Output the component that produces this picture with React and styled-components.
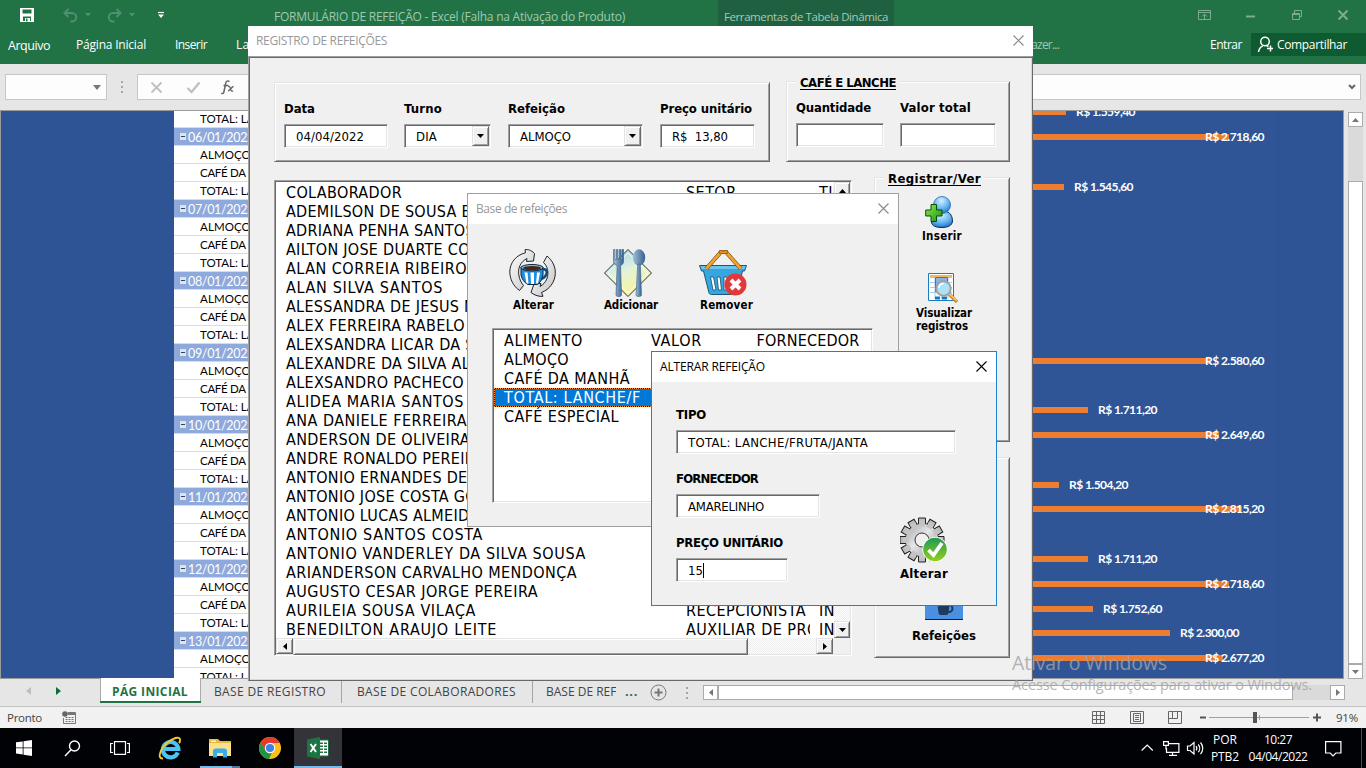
import React, { useLayoutEffect, useRef, useState } from "react";
import styled, { createGlobalStyle, css } from "styled-components";

const Global = createGlobalStyle`
  *, *::before, *::after { box-sizing: border-box; }
  body { margin: 0; background: #000; overflow: hidden; }
  svg { display: block; flex: none; }
`;

const tahoma = `"DejaVu Sans Condensed", "DejaVu Sans", sans-serif`;
const segoe = `"Open Sans", "Noto Sans", sans-serif`;
const calibri = `Lato, "Open Sans", sans-serif`;

/* ---------- text ---------- */

const Label = styled.span`
  display: block;
  flex: none;
  white-space: pre;
  font-family: ${(p) => p.$font || tahoma};
  font-size: ${(p) => p.$size || 13}px;
  font-weight: ${(p) => (p.$bold ? 700 : 400)};
  line-height: ${(p) => p.$lh || 16}px;
  color: ${(p) => p.$color || "#000"};
  ${(p) => p.$ml !== undefined && css`margin-left: ${p.$ml}px;`}
  ${(p) => p.$mt !== undefined && css`margin-top: ${p.$mt}px;`}
  ${(p) => p.$underline && css`text-decoration: underline; text-underline-offset: 2px; text-decoration-skip-ink: none;`}
`;

/* Tracks its text so that the run is exactly w pixels wide. */
function Text({ w, ls = 0, children, ...rest }) {
  const ref = useRef(null);
  const [track, setTrack] = useState(ls);
  useLayoutEffect(() => {
    if (!w) return;
    const el = ref.current;
    const range = document.createRange();
    range.selectNodeContents(el);
    const count = el.textContent.length;
    const natural = range.getBoundingClientRect().width - track * count;
    setTrack((w - natural) / count);
  }, [w]);
  return (
    <Label ref={ref} style={{ letterSpacing: `${track}px` }} {...rest}>
      {children}
    </Label>
  );
}

/* ---------- Excel window ---------- */

const Screen = styled.div`
  position: relative;
  width: 1366px;
  height: 768px;
  overflow: hidden;
  display: flex;
  flex-direction: column;
  background: #e6e6e6;
`;

const TitleBar = styled.div`
  height: 26px;
  flex: none;
  display: flex;
  background: #217346;
`;

const QuickAccess = styled.div`
  width: 274px;
  display: flex;
  padding: 8px 0 0 20px;
`;

const WindowTitle = styled.div`
  width: 444px;
  padding-top: 9px;
`;

const ContextTab = styled.div`
  width: 176px;
  padding: 9px 0 0 6px;
  background: #1e6040;
`;

const WindowButtons = styled.div`
  flex: 1;
  display: flex;
  justify-content: flex-end;
  padding: 9px 17px 0 0;
`;

const RibbonTabs = styled.div`
  height: 38px;
  flex: none;
  display: flex;
  align-items: flex-start;
  padding-top: 7px;
  background: #217346;
`;

const TabSlot = styled.div`
  width: ${(p) => p.$w}px;
  flex: none;
  padding-left: ${(p) => p.$pl || 0}px;
  padding-top: ${(p) => p.$pt ?? 4}px;
`;

const ShareButton = styled.div`
  display: flex;
  align-items: center;
  width: 115px;
  height: 23px;
  padding-left: 6px;
  background: #0f5b31;
`;

const FormulaBar = styled.div`
  height: 46px;
  flex: none;
  display: flex;
  padding: 10px 5px 10px 5px;
`;

const BarBox = styled.div`
  width: ${(p) => (p.$w ? `${p.$w}px` : "auto")};
  flex: ${(p) => (p.$w ? "none" : 1)};
  height: 26px;
  display: flex;
  align-items: center;
  justify-content: ${(p) => p.$justify || "flex-end"};
  padding: 0 ${(p) => p.$pr}px 0 ${(p) => p.$pl || 0}px;
  background: #fdfdfd;
  border: 1px solid #c6c6c6;
`;

const Grip = styled.div`
  width: ${(p) => p.$w}px;
  display: flex;
  flex-direction: column;
  align-items: center;
  justify-content: center;
  gap: 3px;
  & > i { width: 2px; height: 2px; background: #a6a6a6; }
`;

const SheetArea = styled.div`
  height: 569px;
  flex: none;
  display: flex;
`;

const Sheet = styled.div`
  width: 1344px;
  display: flex;
  overflow: hidden;
  background: #2f5496;
  border: 1px solid #9b9b9b;
`;

const SideBlock = styled.div`
  width: 173px;
  flex: none;
`;

const Pivot = styled.div`
  width: 276px;
  flex: none;
  background: #fff;
`;

const PivotRow = styled.div`
  height: ${(p) => (p.$first ? 17 : 18)}px;
  display: flex;
  align-items: center;
  padding-left: ${(p) => (p.$head ? 6 : 26)}px;
  gap: 2px;
  background: ${(p) => (p.$head ? "#8ea9db" : "#fff")};
  border-bottom: 1px solid #d0dcf0;
`;

const Chart = styled.div`
  flex: 1;
  margin-right: 68px;
  margin-top: -11px;
  padding-left: 550px;
  background: #2f5597;
`;

const BarRow = styled.div`
  display: flex;
  align-items: center;
  height: 24.82px;
`;

const Bar = styled.div`
  flex: none;
  height: 6px;
  background: #ed7d31;
`;

const BarLabel = styled.div`
  position: relative;
`;

const VScroll = styled.div`
  width: 22px;
  display: flex;
  flex-direction: column;
  padding: 2px 3px 0 4px;
`;

const ScrollBtn = styled.div`
  width: 15px;
  height: 15px;
  flex: none;
  display: flex;
  align-items: center;
  justify-content: center;
  background: #fff;
  border: 1px solid #ababab;
`;

const Track = styled.div`
  flex: none;
  ${(p) => (p.$vertical ? `height: ${p.$size}px;` : `width: ${p.$size}px;`)}
  background: #dadada;
`;

const Thumb = styled.div`
  flex: 1;
  background: #fff;
  border: 1px solid #ababab;
`;

const TabStrip = styled.div`
  height: 28px;
  flex: none;
  display: flex;
  border-bottom: 1px solid #c3c3c3;
`;

const SheetNav = styled.div`
  width: 100px;
  display: flex;
  padding: 8px 0 0 26px;
  gap: 25px;
`;

const SheetTab = styled.div`
  width: ${(p) => p.$w}px;
  height: 24px;
  padding: 5px 0 0 ${(p) => p.$pl}px;
  overflow: hidden;
  ${(p) =>
    p.$active
      ? css`
          margin-top: -1px;
          height: 25px;
          padding-top: 6px;
          background: #fff;
          border: solid #217346;
          border-width: 0 0 2px;
          box-shadow: inset 1px 0 #ababab, inset -1px 0 #ababab;
        `
      : css`
          border-right: 1px solid ${p.$last ? "transparent" : "#a5a5a5"};
        `}
`;

const HScroll = styled.div`
  flex: 1;
  display: flex;
  height: 15px;
  margin: 6px 21px 0 0;
`;

const StatusBar = styled.div`
  height: 21px;
  flex: none;
  display: flex;
  align-items: center;
  background: #f1f1f1;
  padding: 0 8px 0 7px;
`;

const ViewButtons = styled.div`
  margin-left: auto;
  display: flex;
  gap: 24px;
`;

const Zoom = styled.div`
  display: flex;
  align-items: center;
  margin-left: 17px;
`;

/* ---------- taskbar ---------- */

const Taskbar = styled.div`
  height: 40px;
  flex: none;
  display: flex;
  background: #010206;
`;

const TaskButton = styled.div`
  width: ${(p) => p.$w || 49}px;
  height: 40px;
  display: flex;
  align-items: center;
  justify-content: center;
  background: ${(p) => (p.$active ? "#333439" : "transparent")};
  ${(p) => p.$open && css`box-shadow: inset 0 -2px #76b9ed;`}
`;

const OpenMark = styled.div`
  width: 40px;
  margin-right: 5px;
  margin-left: 4px;
  height: 40px;
  display: flex;
  align-items: center;
  justify-content: center;
  background: linear-gradient(90deg, #76b9ed 32px, #4d7899 32px) 0 38px / 40px 2px no-repeat;
`;

const Tray = styled.div`
  margin-left: auto;
  display: flex;
  align-items: center;
  width: 225px;
`;

const TrayText = styled.div`
  width: ${(p) => p.$w}px;
  display: flex;
  flex-direction: column;
  align-items: center;
  gap: 1px;
`;

const ShowDesktop = styled.div`
  margin-left: auto;
  width: 5px;
  height: 40px;
  border-left: 1px solid #4a4b4e;
`;

const Watermark = styled.div`
  position: absolute;
  left: 1012px;
  top: 650px;
  opacity: 0.8;
`;

/* ---------- dialogs ---------- */

const Dialog = styled.div`
  position: absolute;
  left: ${(p) => p.$x}px;
  top: ${(p) => p.$y}px;
  width: ${(p) => p.$w}px;
  height: ${(p) => p.$h}px;
  display: flex;
  flex-direction: column;
  background: #f0f0f0;
  ${(p) => p.$edge && css`border: 1px solid ${p.$edge};`}
`;

const DialogTitle = styled.div`
  height: 30px;
  flex: none;
  display: flex;
  justify-content: space-between;
  align-items: center;
  padding: 0 ${(p) => p.$pr || 9}px 0 8px;
  background: #fff;
  & > svg { margin-top: -2px; }
`;

const MainBody = styled.div`
  flex: 1;
  padding: 24px 0 0 25px;
  border: 1px solid;
  border-color: #a0a0a0 #696969 #696969 #a0a0a0;
  box-shadow: inset 1px 1px #696969, inset -1px -1px #d8d8d8;
`;

const Row = styled.div`
  display: flex;
  align-items: flex-start;
  gap: ${(p) => p.$gap || 0}px;
  margin-top: ${(p) => p.$mt || 0}px;
`;

const Column = styled.div`
  display: flex;
  flex-direction: column;
  gap: ${(p) => p.$gap || 0}px;
`;

const Frame = styled.div`
  position: relative;
  width: ${(p) => p.$w}px;
  height: ${(p) => p.$h}px;
  margin-top: ${(p) => p.$mt || 0}px;
  padding: ${(p) => p.$pad || "0"};
  border: 1px solid;
  border-color: #e3e3e3 #696969 #696969 #e3e3e3;
  box-shadow: inset 1px 1px #fff, inset -1px -1px #a0a0a0;
`;

const Legend = styled.div`
  position: absolute;
  top: -7px;
  left: 9px;
  padding: 0 4px;
  background: #f0f0f0;
`;

const sunken = css`
  background: #fff;
  border: 1px solid;
  border-color: #a0a0a0 #fff #fff #a0a0a0;
  box-shadow: inset 1px 1px #696969, inset -1px -1px #e3e3e3;
`;

const FieldSlot = styled.div`
  width: ${(p) => p.$w}px;
`;

const FieldBox = styled.div`
  ${sunken}
  display: flex;
  align-items: center;
  width: ${(p) => p.$w}px;
  height: 24px;
  margin-top: 7px;
  padding: 1px 1px 1px 11px;
`;

const raised = css`
  background: #f0f0f0;
  border: 1px solid;
  border-color: #e3e3e3 #696969 #696969 #e3e3e3;
  box-shadow: inset 1px 1px #fff, inset -1px -1px #a0a0a0;
`;

const ClassicBtn = styled.div`
  ${raised}
  width: ${(p) => p.$w || 17}px;
  height: ${(p) => p.$h || 17}px;
  flex: none;
  display: flex;
  align-items: center;
  justify-content: center;
  margin-left: ${(p) => (p.$end ? "auto" : 0)};
`;

const ClassicThumb = styled.div`
  ${raised}
  width: 455px;
  height: 17px;
`;

const ClassicTrack = styled.div`
  flex: 1;
  background: repeating-conic-gradient(#fff 0 25%, #ececec 0 50%) 0 0 / 2px 2px;
`;

const ListBox = styled.div`
  ${sunken}
  width: ${(p) => p.$w}px;
  height: ${(p) => p.$h}px;
  margin-top: ${(p) => p.$mt || 0}px;
  padding: 1px;
`;

const ListMain = styled.div`
  display: flex;
  height: 456px;
`;

const ListRows = styled.div`
  flex: 1;
  overflow: hidden;
  padding-top: 1px;
`;

const ListRow = styled.div`
  display: grid;
  grid-template-columns: ${(p) => p.$cols};
  height: 19px;
  padding-left: 10px;
  ${(p) =>
    p.$selected &&
    css`
      background: #0078d7;
      box-shadow: inset 0 0 0 1px #1a1208;
      outline: 1px dotted #ff8728;
      outline-offset: -1px;
    `}
`;

const Cell = styled.div`
  overflow: hidden;
  margin-right: ${(p) => p.$mr || 0}px;
`;

const VBar = styled.div`
  width: 16px;
  display: flex;
  flex-direction: column;
`;

const HBar = styled.div`
  height: 16px;
  display: flex;
  background: #f0f0f0;
`;

const Corner = styled.div`
  width: 17px;
  background: #f0f0f0;
`;

const DialogBody = styled.div`
  padding: ${(p) => p.$pad};
`;

const ActionButton = styled.div`
  width: 95px;
  display: flex;
  flex-direction: column;
`;

const IconPad = styled.div`
  padding-left: ${(p) => p.$l}px;
`;

const GearAction = styled.div`
  margin: -65px 0 0 224px;
`;

const Caret = styled.i`
  width: 1px;
  height: 15px;
  background: #000;
`;

/* ---------- icons ---------- */

const Tri = ({ dir = "down", c = "#777", s = 7, h }) => {
  const hh = h || Math.ceil(s / 2);
  const wide = dir === "down" || dir === "up";
  const w = wide ? s : hh;
  const t = wide ? hh : s;
  const d = {
    down: `M0 0H${s}L${s / 2} ${hh}Z`,
    up: `M0 ${hh}H${s}L${s / 2} 0Z`,
    left: `M${hh} 0V${s}L0 ${s / 2}Z`,
    right: `M0 0V${s}L${hh} ${s / 2}Z`,
  }[dir];
  return (
    <svg width={w} height={t} viewBox={`0 0 ${w} ${t}`}>
      <path d={d} fill={c} />
    </svg>
  );
};

const CloseX = ({ c }) => (
  <svg width="11" height="11" viewBox="0 0 11 11" stroke={c} strokeWidth="1.1">
    <path d="M.5.5l10 10M10.500.5l-10 10" />
  </svg>
);

const QuickIcons = () => (
  <svg width="150" height="15" viewBox="0 0 150 15" fill="none">
    <path d="M0 0h14v14H0z" fill="#fff" />
    <path d="M2.500 1.500h9v4h-9z" fill="#217346" />
    <path d="M3 8.500h8v4.500H3z" fill="#217346" />
    <path d="M5 10h5v4H5z" fill="#fff" />
    <path d="M6 10.500h1.500v3H6z" fill="#217346" />
    <g stroke="#4f9070" strokeWidth="2">
      <path d="M45 5h7a4 4 0 0 1 0 8.500h-1.500M48.500 1L44.500 5l4 4" />
      <path d="M100 5h-7a4 4 0 0 0 0 8.500h1.500M96.500 1l4 4-4 4" />
    </g>
    <path d="M65 5h6l-3 3.500zM109 5h6l-3 3.500z" fill="#4f9070" />
    <path d="M138 4.500h6" stroke="#fff" strokeWidth="1.200" />
    <path d="M138 6.500h6l-3 3.500z" fill="#fff" />
  </svg>
);

const WindowIcons = () => (
  <svg width="152" height="13" viewBox="0 0 152 13" fill="none" stroke="#7dac91">
    <path d="M1.500 1.500h12v9h-12zM1.500 3.500h12M7.500 10V5M5 7.500L7.500 5 10 7.500" />
    <path d="M49 7.500h9" strokeWidth="2" />
    <path d="M95.500 4.500h7v6h-7zM95.500 5.500h7M97.500 4V1.500h7v6H103" />
    <path d="M141.500 1.500l9 9M150.500 1.500l-9 9" strokeWidth="2" />
  </svg>
);

const ShareIcon = () => (
  <svg width="17" height="17" viewBox="0 0 17 17" fill="none" stroke="#fff" strokeWidth="1.500">
    <circle cx="8" cy="5.500" r="4.300" />
    <path d="M1.500 16c.3-3 2-5 4.300-6.200M9.500 9.500l2 1M10 12.500h6M13.500 9.500v6" />
  </svg>
);

const FxIcons = () => (
  <svg width="86" height="18" viewBox="0 0 86 18" fill="none">
    <path d="M1.500 4.500l10 10M11.500 4.500l-10 10" stroke="#c0c0c0" strokeWidth="1.800" />
    <path d="M37.500 10l4 4 8-9.500" stroke="#c0c0c0" strokeWidth="2.300" />
    <path d="M79.500 3.500c-2.500-1.500-3.500 0-4 2.500l-1.500 7.500c-.4 2-1.500 2.500-2.800 1.800M73.500 7.500h5" stroke="#666" strokeWidth="1.500" />
    <path d="M78 8.500c1.500-.5 2 .5 2.500 2.300s1 2.700 2.700 2.200M83.500 8.500c-1.500 0-4 4.500-5.500 4.500" stroke="#666" strokeWidth="1.300" />
  </svg>
);

const Collapse = () => (
  <svg width="6" height="7" viewBox="0 0 6 7">
    <path d="M0 0h6v7H0z" fill="#dfe3ea" />
    <path d="M1 3.500h4" stroke="#33435e" />
  </svg>
);

const InsertIcon = () => (
  <svg width="30" height="33" viewBox="0 0 30 33">
    <defs>
      <radialGradient id="ball" cx=".45" cy=".25" r=".8">
        <stop offset="0" stopColor="#d4f0ff" />
        <stop offset=".55" stopColor="#67b7f2" />
        <stop offset="1" stopColor="#1668c4" />
      </radialGradient>
      <linearGradient id="plus" x2="1" y2="1">
        <stop offset="0" stopColor="#8cf04e" />
        <stop offset="1" stopColor="#1b8f10" />
      </linearGradient>
    </defs>
    <path d="M6.500 26c0-6 4-9.500 8-10.500h7c4 1 6 5.500 6 9.500 0 4.500-5 6.500-10.500 6.500S6.500 30 6.500 26z" fill="url(#ball)" stroke="#0b2d5a" />
    <circle cx="17" cy="9" r="8.500" fill="url(#ball)" stroke="#2a6aa6" strokeWidth=".8" />
    <path d="M6 8.500h5.500V14H17v6h-5.500v5.500H6V20H.700v-6H6z" fill="url(#plus)" stroke="#0d4d08" />
  </svg>
);

const ViewIcon = () => (
  <svg width="31" height="31" viewBox="0 0 31 31">
    <path d="M.500.500h25v27H.500z" fill="#fff" stroke="#1a7cc0" />
    <path d="M2 2h22v3H2z" fill="#f5b851" />
    <path d="M2 9.500h22M2 14.500h22M2 19.500h22M7 2v24M13.500 2v24M20 2v24" stroke="#a9c8e8" />
    <path d="M7 5h13v14H7z" fill="#6fa0dc" fillOpacity=".8" />
    <path d="M7.500 4.500h12v14h-12z" fill="none" stroke="#3a78bd" />
    <path d="M7 23.500h5v3H7zM14 23.500h5v3h-5z" fill="#1d75bd" />
    <path d="M21 21l8 8" stroke="#d88d22" strokeWidth="3.800" />
    <path d="M21 20.500l7.500 7" stroke="#f8cf74" strokeWidth="1.300" />
    <circle cx="15.500" cy="15.500" r="7.200" fill="#aee1f6" stroke="#9aa3aa" strokeWidth="2" />
    <path d="M11 15c0-3 2-4.500 4.500-4.500" stroke="#fff" strokeWidth="1.500" fill="none" />
  </svg>
);

const MealIcon = () => (
  <svg width="38" height="31" viewBox="0 0 38 31">
    <path d="M0 0h38v30H0z" fill="#4a90e2" />
    <path d="M0 29.500h38" stroke="#0b1c38" />
    <path d="M12 9h13l-1.500 14c-.2 1-1 2-2 2h-6c-1 0-1.700-.7-2-2z" fill="#1f3a5c" />
    <circle cx="24" cy="18.500" r="3.500" fill="none" stroke="#1f3a5c" strokeWidth="2" />
  </svg>
);

const ChangeIcon = () => (
  <svg width="48" height="48" viewBox="0 0 48 48">
    <defs>
      <linearGradient id="arrow" x2="1" y2="1">
        <stop offset="0" stopColor="#fff" />
        <stop offset="1" stopColor="#c4c4c4" />
      </linearGradient>
    </defs>
    <path d="M16 .700C19 .200 22 1 25.500 4.500L24.500 12 17.500 12.500 18 9.500C11 13 8.500 20 10 27c.7 3.500 2 6.500 4.500 9.500L10.500 41.500C4 37 1 30 .800 23 .700 14 7 6 16.500 3.800z" fill="url(#arrow)" stroke="#222" />
    <path d="M38 7c5.500 4.500 8.500 10.500 8.300 17.500C46 33 40.500 40.500 32.500 43.500l1.500 3.800c-4 .4-8-.8-12-3.800l3-8.500 7-.500-1 3c6.500-3.500 9-10.500 7.500-17-.7-3-2-5-4-7z" fill="url(#arrow)" stroke="#222" />
    <path d="M12 18h22v8c-1 5-3 8-6 9.500h-9c-4-2-6-5.500-7-9.500z" fill="#1f8de0" stroke="#06253d" />
    <path d="M15.500 23.500h3l1 11h-2zM21.500 23.500h3.500v11.500h-3zM28 23.500h3l-2 11h-2z" fill="#fff" />
    <path d="M34 20.500c4-1 4.500 3 3 5.500-1 2-3 3.500-5 4" stroke="#0a4c86" strokeWidth="2.600" fill="none" />
    <ellipse cx="23" cy="18.700" rx="11" ry="3.200" fill="#7cc9f6" stroke="#06253d" />
    <ellipse cx="23" cy="19.200" rx="9" ry="2.300" fill="#4b2616" />
  </svg>
);

const AddIcon = () => (
  <svg width="48" height="48" viewBox="0 0 48 48">
    <defs>
      <linearGradient id="plate" x1=".1" x2=".5" y2="1">
        <stop offset="0" stopColor="#9fd2f4" />
        <stop offset=".5" stopColor="#e2f2dc" />
        <stop offset="1" stopColor="#fbf39a" />
      </linearGradient>
      <linearGradient id="steel" x2="1">
        <stop offset="0" stopColor="#a3bfd9" />
        <stop offset="1" stopColor="#33618f" />
      </linearGradient>
    </defs>
    <path d="M24 .500L47.500 24 24 47.500.500 24z" fill="url(#plate)" stroke="#2f342f" />
    <path d="M24 4L44 24 24 44 4 24z" fill="none" stroke="#fff" strokeOpacity=".7" />
    <path d="M9.500.500h1.500v10h1.500V.500H14v10h1.500V.500H17v10h1V.500h1.500v12c0 2-1.300 3.500-3 4l1 29.500c0 2-5.500 2-5.500 0l1.200-29.500C11 16 9.500 14.500 9.500 12.500z" fill="url(#steel)" stroke="#41658a" strokeWidth=".7" />
    <ellipse cx="35" cy="8.500" rx="6.200" ry="8.200" fill="url(#steel)" />
    <path d="M33.700 15h2.600l1.200 31c0 2-5.500 2-5.500 0z" fill="url(#steel)" stroke="#41658a" strokeWidth=".6" />
  </svg>
);

const RemoveIcon = () => (
  <svg width="49" height="48" viewBox="0 0 49 48">
    <path d="M.500 16.500h47l-2 5.500h-2L38 43.500c-.5 1.500-1 2-2.500 2h-23c-1.500 0-2.300-.7-2.600-2L4.500 22h-2z" fill="#37a6de" stroke="#1c567a" />
    <path d="M1.500 17h45l-.8 3H2.500z" fill="#6cc5ee" />
    <path d="M11.500 28h3l2.500 13h-3zM18 28h3l1.500 13h-3zM25 28h3v13h-3zM31 28h3l-2 13h-2z" fill="#fff" stroke="#174a6a" strokeWidth=".8" />
    <path d="M7 20L22 3h5l15 17" fill="none" stroke="#7a4a12" strokeWidth="4" />
    <path d="M7 20L22 3h5l15 17" fill="none" stroke="#f0a331" strokeWidth="2.800" />
    <path d="M20.500 1.500h2.500l1.500 1 1.500-1h2.500v3h-8z" fill="#e2922a" stroke="#7a4a12" strokeWidth=".6" />
    <circle cx="36.500" cy="35.500" r="11" fill="#e0393b" />
    <path d="M32 31l9 9M41 31l-9 9" stroke="#fff" strokeWidth="4" />
  </svg>
);

const teeth = Array.from({ length: 12 }, (_, i) => i * 30);
const GearIcon = () => (
  <svg width="49" height="48" viewBox="0 0 49 48">
    <defs>
      <linearGradient id="gear" x2="1" y2="1">
        <stop offset="0" stopColor="#a2a2a2" />
        <stop offset=".45" stopColor="#e6e6e6" />
        <stop offset="1" stopColor="#9a9a9a" />
      </linearGradient>
      <linearGradient id="ok" x2="0" y2="1">
        <stop offset="0" stopColor="#1f9a55" />
        <stop offset="1" stopColor="#93cf1e" />
      </linearGradient>
    </defs>
    {teeth.map((a) => (
      <path key={a} d="M18.500 8V1h7v7" transform={`rotate(${a} 22 23)`} fill="#bdbdbd" stroke="#222" />
    ))}
    <circle cx="22" cy="23" r="17" fill="#222" />
    <circle cx="22" cy="23" r="16.300" fill="url(#gear)" />
    {teeth.map((a) => (
      <path key={a} d="M19 9.500V4h6v5.500z" transform={`rotate(${a} 22 23)`} fill="#c4c4c4" />
    ))}
    <circle cx="22" cy="23" r="7" fill="#f0f0f0" stroke="#333" />
    <circle cx="35" cy="32.500" r="12.600" fill="#fff" />
    <circle cx="35" cy="32.500" r="11.800" fill="url(#ok)" />
    <path d="M28.500 33l5 5L42 26" stroke="#fff" strokeWidth="3.800" fill="none" />
  </svg>
);

const MacroIcon = () => (
  <svg width="14" height="13" viewBox="0 0 14 13" fill="none" stroke="#777">
    <path d="M6 1.500h7.500v11h-12V7M6 2.500h7.500M6 3.500h7.500" />
    <path d="M3.500 6.500h8M3.500 8.500h8M3.500 10.500h8" strokeDasharray="2 1" />
    <circle cx="3" cy="3" r="2.800" fill="#666" stroke="none" />
  </svg>
);

const GridView = () => (
  <svg width="14" height="14" viewBox="0 0 14 14" fill="none" stroke="#666">
    <path d="M.500.500h12v12H.500zM4.500.500v12M8.500.500v12M.500 4.500h12M.500 8.500h12" />
  </svg>
);
const PageView = () => (
  <svg width="14" height="14" viewBox="0 0 14 14" fill="none" stroke="#666">
    <path d="M.500.500h13v12H.500zM3.500 2.500h7v8h-7zM5 4.500h4M5 6.500h4M5 8.500h4" />
  </svg>
);
const BreakView = () => (
  <svg width="14" height="14" viewBox="0 0 14 14" fill="none" stroke="#666">
    <path d="M.500.500h13v12H.500zM.500 7.500h9v-7M4.500 7V.500" />
  </svg>
);

const ZoomSlider = () => (
  <svg width="124" height="13" viewBox="0 0 124 13" fill="none">
    <path d="M1 6.500h6" stroke="#555" strokeWidth="2" />
    <path d="M10 6.500h100M60.500 4v5" stroke="#a0a0a0" />
    <path d="M54 1h4v11h-4z" fill="#555" />
    <path d="M114 6.500h8M118 2.500v8" stroke="#555" strokeWidth="2" />
  </svg>
);

const WinLogo = () => (
  <svg width="16" height="16" viewBox="0 0 16 16" fill="#fff">
    <path d="M0 2.300L6.700 1.400v6.100H0zM7.500 1.300L16 0v7.500H7.500zM0 8.300h6.700v6.200L0 13.600zM7.500 8.300H16V16l-8.500-1.300z" />
  </svg>
);
const SearchIcon = () => (
  <svg width="17" height="17" viewBox="0 0 17 17" fill="none" stroke="#fff" strokeWidth="1.400">
    <circle cx="10.500" cy="6" r="5" />
    <path d="M7 9.700L1 16" />
  </svg>
);
const TaskView = () => (
  <svg width="20" height="14" viewBox="0 0 20 14" fill="none" stroke="#fff" strokeWidth="1.200">
    <path d="M4.500.600h11v12.800h-11zM3 2.500H.600v9H3M17 2.500h2.400v9H17" />
  </svg>
);
const IeIcon = () => (
  <svg width="24" height="24" viewBox="0 0 24 24" fill="none">
    <path d="M19.800 16.500A7.700 7.700 0 1 1 20.300 13H7" stroke="#4cc4f2" strokeWidth="4.200" />
    <path d="M5 22.500C-2 23 3 11 11 5.500c6-4.500 12-5.500 11-.500-.2 1-.5 1.500-1 2.300" stroke="#f6c72d" strokeWidth="1.900" />
  </svg>
);
const FolderIcon = () => (
  <svg width="22" height="19" viewBox="0 0 22 19">
    <path d="M0 0h9l2 2h11v15H0z" fill="#e8b93d" />
    <path d="M0 4h22v13H0z" fill="#fde08c" />
    <path d="M2 1.500h5v1.500H2z" fill="#fff3c4" />
    <path d="M4 18.500V11l2-1.500h10l2 1.500v7.500h-4V14H8v4.500z" fill="#3aaee8" />
  </svg>
);
const ChromeIcon = () => (
  <svg width="22" height="22" viewBox="0 0 22 22">
    <circle cx="11" cy="11" r="11" fill="#fbc116" />
    <path d="M1.500 5.500a11 11 0 0 1 19 0L20.500 6H11L6.500 13.500z" fill="#e33b2e" />
    <path d="M1.500 5.500L6.700 13.500A5 5 0 0 0 13 15.600L10 22A11 11 0 0 1 1.500 5.500z" fill="#229342" />
    <circle cx="11" cy="11" r="5.200" fill="#fff" />
    <circle cx="11" cy="11" r="4.100" fill="#3f7fe8" />
  </svg>
);
const ExcelIcon = () => (
  <svg width="22" height="22" viewBox="0 0 22 22">
    <path d="M11 3h10.500v16H11z" fill="#fff" stroke="#1f7244" />
    <path d="M13 5.500h3v1.500h-3zM17 5.500h3v1.500h-3zM13 8.500h3V10h-3zM17 8.500h3V10h-3zM13 11.500h3V13h-3zM17 11.500h3V13h-3zM13 14.500h3V16h-3zM17 14.500h3V16h-3z" fill="#1f7244" />
    <path d="M0 2.500L13 0v22L0 19.500z" fill="#1f7244" />
    <path d="M3.500 7l5.500 8M9 7l-5.500 8" stroke="#fff" strokeWidth="1.900" />
  </svg>
);
const TrayIcons = () => (
  <svg width="64" height="18" viewBox="0 0 64 18" fill="none" stroke="#fff" strokeWidth="1.200">
    <path d="M.600 11.500L6.200 6l5.600 5.500" />
    <path d="M28 4.600h9.900v8.800H25.500V9M28 16.400h8M31.500 13.500v3M22.600 2.600h4.800v3.800h-4.800zM25 6.500v4" />
    <path d="M46.500 7v4.500h2.500l4 3.500V3.500L49 7zM55 7.200c1 1.200 1 3 0 4.200M57.200 5.500c2 2.200 2 5.500 0 7.700M59.500 3.500c3 3.300 3 8.300 0 11.600" />
  </svg>
);
const NoticeIcon = () => (
  <svg width="17" height="17" viewBox="0 0 17 17" fill="none" stroke="#fff" strokeWidth="1.200">
    <path d="M.600 1.600h15.300v11.400h-5L8 16l-2.800-3H.600z" />
  </svg>
);

/* ---------- data ---------- */

const days = ["06", "07", "08", "09", "10", "11", "12", "13"];
const meals = [
  ["ALMOÇO", 0.1],
  ["CAFÉ DA MANHÃ", -0.3],
  ["TOTAL: LANCHE/FRUTA", 0],
];

/* [bar end, value]; null leaves the day without a bar */
const bars = [
  [1066, "1.559,40"],
  [1229, "2.718,60"],
  null,
  [1064, "1.545,60"],
  null, null, null, null, null, null,
  [1210, "2.580,60"],
  null,
  [1088, "1.711,20"],
  [1219, "2.649,60"],
  null,
  [1059, "1.504,20"],
  [1242, "2.815,20"],
  null,
  [1088, "1.711,20"],
  [1229, "2.718,60"],
  [1093, "1.752,60"],
  [1170, "2.300,00"],
  [1223, "2.677,20"],
];

const people = [
  ["COLABORADOR", 116, "SETOR", "TIPO"],
  ["ADEMILSON DE SOUSA BRITO"],
  ["ADRIANA PENHA SANTOS"],
  ["AILTON JOSE DUARTE COSTA"],
  ["ALAN CORREIA RIBEIRO", 181],
  ["ALAN SILVA SANTOS", 157],
  ["ALESSANDRA DE JESUS MELO"],
  ["ALEX FERREIRA RABELO", 179],
  ["ALEXSANDRA LICAR DA SILVA"],
  ["ALEXANDRE DA SILVA ALVES"],
  ["ALEXSANDRO PACHECO", 178],
  ["ALIDEA MARIA SANTOS", 178],
  ["ANA DANIELE FERREIRA", 181],
  ["ANDERSON DE OLIVEIRA", 184],
  ["ANDRE RONALDO PEREIRA"],
  ["ANTONIO ERNANDES DE SOUSA"],
  ["ANTONIO JOSE COSTA GOMES"],
  ["ANTONIO LUCAS ALMEIDA"],
  ["ANTONIO SANTOS COSTA", 197],
  ["ANTONIO VANDERLEY DA SILVA SOUSA", 300],
  ["ARIANDERSON CARVALHO MENDONÇA", 291],
  ["AUGUSTO CESAR JORGE PEREIRA", 252],
  ["AURILEIA SOUSA VILAÇA", 190, "RECEPCIONISTA", "INTERNO"],
  ["BENEDILTON ARAUJO LEITE", 211, "AUXILIAR DE PRODUÇÃO", "INTERNO"],
];

/* ---------- parts ---------- */

const Field = ({ label, lw, w, slot, value, vw, combo }) => (
  <FieldSlot $w={slot || w}>
    <Text w={lw} $bold>{label}</Text>
    <FieldBox $w={w}>
      {value && <Text w={vw} $mt={2}>{value}</Text>}
      {combo && (
        <ClassicBtn $end $w={17} $h={20}>
          <Tri c="#000" s={7} h={4} />
        </ClassicBtn>
      )}
    </FieldBox>
  </FieldSlot>
);

const MainDialog = () => (
  <Dialog $x={248} $y={26} $w={785} $h={655}>
    <DialogTitle $pr={9}>
      <Text w={131} $font={segoe} $size={12} $color="#999">REGISTRO DE REFEIÇÕES</Text>
      <CloseX c="#888" />
    </DialogTitle>
    <MainBody>
      <Row $gap={16}>
        <Frame $w={496} $h={80} $mt={1} $pad="18px 0 0 9px">
          <Row $gap={16}>
            <Field label="Data" lw={31} w={104} value="04/04/2022" vw={68} />
            <Field label="Turno" lw={38} w={87} slot={88} value="DIA" vw={21} combo />
            <Field label="Refeição" lw={57} w={135} slot={136} value="ALMOÇO" vw={51} combo />
            <Field label="Preço unitário" lw={92} w={95} value="R$  13,80" vw={56} />
          </Row>
        </Frame>
        <Frame $w={224} $h={81} $pad="18px 0 0 9px">
          <Legend>
            <Text w={96} $bold $underline>CAFÉ E LANCHE</Text>
          </Legend>
          <Row $gap={16}>
            <Field label="Quantidade" lw={75} w={88} />
            <Field label="Valor total" lw={71} w={96} />
          </Row>
        </Frame>
      </Row>
      <Row $gap={22} $mt={15}>
        <ListBox $w={578} $h={476} $mt={3}>
          <ListMain>
            <ListRows>
              {people.map(([name, w, sector, kind]) => (
                <ListRow key={name} $cols="400px 133px 1fr">
                  <Cell><Text w={w} ls={0.28} $size={16} $lh={19}>{name}</Text></Cell>
                  <Cell $mr={9}><Text ls={0.45} $size={16} $lh={19}>{sector}</Text></Cell>
                  <Cell><Text ls={0.4} $size={16} $lh={19}>{kind}</Text></Cell>
                </ListRow>
              ))}
            </ListRows>
            <VBar>
              <ClassicBtn $w={16}><Tri dir="up" c="#000" s={7} h={4} /></ClassicBtn>
              <ClassicTrack />
              <ClassicBtn $w={16}><Tri c="#000" s={7} h={4} /></ClassicBtn>
            </VBar>
          </ListMain>
          <HBar>
            <ClassicBtn $w={17} $h={16}><Tri dir="left" c="#000" s={7} h={4} /></ClassicBtn>
            <ClassicThumb />
            <ClassicTrack />
            <ClassicBtn $w={17} $h={16}><Tri dir="right" c="#000" s={7} h={4} /></ClassicBtn>
            <Corner />
          </HBar>
        </ListBox>
        <Column $gap={15}>
          <Frame $w={136} $h={265} $pad="18px 0 0 50px">
            <Legend>
              <Text w={93} $bold $underline>Registrar/Ver</Text>
            </Legend>
            <InsertIcon />
            <Text w={40} $bold $size={11.500} $ml={-3} $mt={-1}>Inserir</Text>
            <Column>
              <ViewPad><ViewIcon /></ViewPad>
              <Text w={56} $bold $size={11.500} $lh={13} $ml={-9} $mt={3}>Visualizar</Text>
              <Text w={52} $bold $size={11.500} $lh={13} $ml={-9}>registros</Text>
            </Column>
          </Frame>
          <Frame $w={136} $h={201} $pad="132px 0 0 50px">
            <MealIcon />
            <Text w={64} $bold $mt={7} $ml={-13}>Refeições</Text>
          </Frame>
        </Column>
      </Row>
    </MainBody>
  </Dialog>
);

const ViewPad = styled.div`
  padding: 29px 0 0 3px;
`;

const foodCols = "147px 105.5px 1fr";
const foods = [
  ["ALMOÇO", 65],
  ["CAFÉ DA MANHÃ", 126],
  ["TOTAL: LANCHE/F", 137],
  ["CAFÉ ESPECIAL", 115],
];

const MealsDialog = () => (
  <Dialog $x={467} $y={193} $w={432} $h={334} $edge="#a0a0a0">
    <DialogTitle>
      <Text w={91} $font={segoe} $size={12} $color="#999">Base de refeições</Text>
      <CloseX c="#888" />
    </DialogTitle>
    <DialogBody $pad="25px 0 0 24px">
      <Row>
        <ActionButton>
          <IconPad $l={17}><ChangeIcon /></IconPad>
          <Text w={41} $bold $size={11.500} $ml={21}>Alterar</Text>
        </ActionButton>
        <ActionButton>
          <IconPad $l={17}><AddIcon /></IconPad>
          <Text w={54} $bold $size={11.500} $ml={17}>Adicionar</Text>
        </ActionButton>
        <ActionButton>
          <IconPad $l={17}><RemoveIcon /></IconPad>
          <Text w={53} $bold $size={11.500} $ml={18}>Remover</Text>
        </ActionButton>
      </Row>
      <ListBox $w={381} $h={175} $mt={15}>
        <ListRows>
          <ListRow $cols={foodCols}>
            <Text w={79} $size={16} $lh={19}>ALIMENTO</Text>
            <Text w={51} $size={16} $lh={19}>VALOR</Text>
            <Text w={103} $size={16} $lh={19}>FORNECEDOR</Text>
          </ListRow>
          {foods.map(([f, w], i) => (
            <ListRow key={f} $cols={foodCols} $selected={i === 2}>
              <Text w={w} $size={16} $lh={19} $color={i === 2 ? "#fff" : "#000"}>{f}</Text>
            </ListRow>
          ))}
        </ListRows>
      </ListBox>
    </DialogBody>
  </Dialog>
);

const EditDialog = () => (
  <Dialog $x={651} $y={351} $w={346} $h={255} $edge="#1883d7">
    <DialogTitle>
      <Text w={105} $font={segoe} $size={12}>ALTERAR REFEIÇÃO</Text>
      <CloseX c="#000" />
    </DialogTitle>
    <DialogBody $pad="25px 0 0 24px">
      <Column $gap={17}>
        <Field label="TIPO" lw={30} w={280} value="TOTAL: LANCHE/FRUTA/JANTA" vw={180} />
        <Field label="FORNECEDOR" lw={82} w={144} value="AMARELINHO" vw={76} />
        <div>
          <Text w={107} $bold>PREÇO UNITÁRIO</Text>
          <FieldBox $w={112}>
            <Text w={15} $mt={2}>15</Text>
            <Caret />
          </FieldBox>
        </div>
      </Column>
      <GearAction>
        <GearIcon />
        <Text w={48} $bold $mt={1}>Alterar</Text>
      </GearAction>
    </DialogBody>
  </Dialog>
);

const W = "#fff";

export default function App() {
  return (
    <>
      <Global />
      <Screen>
        <TitleBar>
          <QuickAccess><QuickIcons /></QuickAccess>
          <WindowTitle>
            <Text w={351} $font={segoe} $size={12} $color="#a0c8b0">
              FORMULÁRIO DE REFEIÇÃO - Excel (Falha na Ativação do Produto)
            </Text>
          </WindowTitle>
          <ContextTab>
            <Text w={164} $font={segoe} $size={11.500} $color="#a5c9b4">Ferramentas de Tabela Dinâmica</Text>
          </ContextTab>
          <WindowButtons><WindowIcons /></WindowButtons>
        </TitleBar>
        <RibbonTabs>
          <TabSlot $w={76} $pl={8} $pt={5}><Text w={42} $font={segoe} $size={12.500} $color={W}>Arquivo</Text></TabSlot>
          <TabSlot $w={99}><Text w={70} $font={segoe} $size={12} $color={W}>Página Inicial</Text></TabSlot>
          <TabSlot $w={61}><Text w={32} $font={segoe} $size={12} $color={W}>Inserir</Text></TabSlot>
          <TabSlot $w={789}><Text w={98} $font={segoe} $size={12} $color={W}>Layout da Página</Text></TabSlot>
          <TabSlot $w={185} $pl={3}><Text w={31} $font={segoe} $size={12} $color="#a0c8b0">fazer...</Text></TabSlot>
          <TabSlot $w={41}><Text w={32} $font={segoe} $size={12} $color={W}>Entrar</Text></TabSlot>
          <ShareButton>
            <ShareIcon />
            <Text w={70} $font={segoe} $size={12} $color={W} $ml={3} $mt={1}>Compartilhar</Text>
          </ShareButton>
        </RibbonTabs>
        <FormulaBar>
          <BarBox $w={102} $pr={5}><Tri s={8} h={5} c="#777" /></BarBox>
          <Grip $w={30}><i /><i /><i /></Grip>
          <BarBox $w={130} $pl={12} $pr={0} $justify="flex-start"><FxIcons /></BarBox>
          <BarBox $pr={4}>
            <svg width="8" height="6" viewBox="0 0 8 6"><path d="M1 1l3 3 3-3" fill="none" stroke="#666" strokeWidth="2" /></svg>
          </BarBox>
        </FormulaBar>
        <SheetArea>
          <Sheet>
            <SideBlock />
            <Pivot>
              <PivotRow $first><Text $font={calibri} $size={11.500}>TOTAL: LANCHE</Text></PivotRow>
              {days.map((d) => (
                <React.Fragment key={d}>
                  <PivotRow $head>
                    <Collapse />
                    <Text w={66} $font={calibri} $size={12.500} $mt={2} $color="#fff">{`${d}/01/2022`}</Text>
                  </PivotRow>
                  {meals.map(([m, ls]) => (
                    (d !== "13" || m !== "CAFÉ DA MANHÃ") && (
                      <PivotRow key={m}><Text ls={ls} $font={calibri} $size={11.500}>{m}</Text></PivotRow>
                    )
                  ))}
                </React.Fragment>
              ))}
            </Pivot>
            <Chart>
              {bars.map((b, i) => {
                if (!b) return <BarRow key={i} />;
                const start = Math.min(b[0] + 10, 1205);
                return (
                  <BarRow key={i}>
                    <Bar style={{ width: b[0] - 1000 }} />
                    <BarLabel style={{ marginLeft: start - b[0] }}>
                      <Text w={59} $font={calibri} $size={12} $bold $color={W}>{`R$ ${b[1]}`}</Text>
                    </BarLabel>
                  </BarRow>
                );
              })}
            </Chart>
          </Sheet>
          <VScroll>
            <ScrollBtn><Tri dir="up" s={7} h={4} /></ScrollBtn>
            <Track $size={54} $vertical />
            <Thumb />
            <ScrollBtn><Tri s={7} h={4} /></ScrollBtn>
          </VScroll>
        </SheetArea>
        <TabStrip>
          <SheetNav>
            <Tri dir="left" s={8} h={5} c="#bdbdbd" />
            <Tri dir="right" s={8} h={5} c="#0f6b3a" />
          </SheetNav>
          <SheetTab $active $w={101} $pl={12}><Text w={76} $font={segoe} $size={12} $bold $color="#217346">PÁG INICIAL</Text></SheetTab>
          <SheetTab $w={141} $pl={13}><Text w={112} $font={segoe} $size={12} $color="#444">BASE DE REGISTRO</Text></SheetTab>
          <SheetTab $w={191} $pl={15}><Text w={159} $font={segoe} $size={12} $color="#444">BASE DE COLABORADORES</Text></SheetTab>
          <SheetTab $w={84} $pl={13} $last><Text ls={0} $font={segoe} $size={12} $color="#444">BASE DE REFEIÇÕES</Text></SheetTab>
          <TabSlot $w={33} $pl={8}><Text w={13} $font={segoe} $size={13} $bold $color="#217346">...</Text></TabSlot>
          <TabSlot $w={27} $pt={5}>
            <svg width="17" height="17" viewBox="0 0 17 17" fill="none" stroke="#777">
              <circle cx="8.500" cy="8.500" r="7.500" />
              <path d="M4.500 8.500h8M8.500 4.500v8" strokeWidth="2" />
            </svg>
          </TabSlot>
          <Grip $w={20}><i /><i /><i /></Grip>
          <Grip $w={6} />
          <HScroll>
            <ScrollBtn><Tri dir="left" s={7} h={4} /></ScrollBtn>
            <Thumb />
            <Track $size={37} />
            <ScrollBtn><Tri dir="right" s={7} h={4} /></ScrollBtn>
          </HScroll>
        </TabStrip>
        <StatusBar>
          <Text w={35} $font={segoe} $size={11.500} $color="#444">Pronto</Text>
          <IconPad $l={20}><MacroIcon /></IconPad>
          <ViewButtons><GridView /><PageView /><BreakView /></ViewButtons>
          <Zoom>
            <ZoomSlider />
            <Text w={22} $font={segoe} $size={11.500} $color="#444" $ml={13}>91%</Text>
          </Zoom>
        </StatusBar>
        <Taskbar>
          <TaskButton $w={48}><WinLogo /></TaskButton>
          <TaskButton $w={48}><SearchIcon /></TaskButton>
          <TaskButton $w={48}><TaskView /></TaskButton>
          <TaskButton $w={52}><IeIcon /></TaskButton>
          <OpenMark><FolderIcon /></OpenMark>
          <TaskButton $w={49}><ChromeIcon /></TaskButton>
          <TaskButton $w={48} $active $open><ExcelIcon /></TaskButton>
          <Tray>
            <TrayIcons />
            <TrayText $w={40}>
              <Text w={24} $font={segoe} $size={12} $color={W}>POR</Text>
              <Text w={28} $font={segoe} $size={12} $color={W}>PTB2</Text>
            </TrayText>
            <TrayText $w={66}>
              <Text w={28} $font={segoe} $size={12} $color={W}>10:27</Text>
              <Text w={59} $font={segoe} $size={12} $color={W}>04/04/2022</Text>
            </TrayText>
            <IconPad $l={14}><NoticeIcon /></IconPad>
            <ShowDesktop />
          </Tray>
        </Taskbar>
        <MainDialog />
        <MealsDialog />
        <EditDialog />
        <Watermark>
          <Text w={155} $font={segoe} $size={19.500} $lh={26} $color="#a3a3a3">Ativar o Windows</Text>
          <Text w={300} $font={segoe} $size={14.500} $lh={18} $color="#a3a3a3">Acesse Configurações para ativar o Windows.</Text>
        </Watermark>
      </Screen>
    </>
  );
}
